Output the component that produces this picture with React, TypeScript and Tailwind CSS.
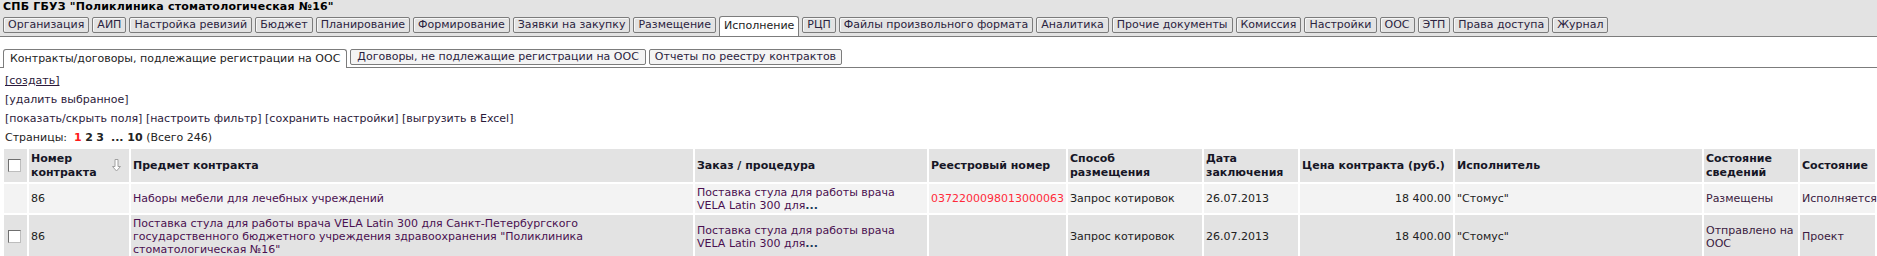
import React from "react";

const topTabs = [
  "Организация",
  "АИП",
  "Настройка ревизий",
  "Бюджет",
  "Планирование",
  "Формирование",
  "Заявки на закупку",
  "Размещение",
  "Исполнение",
  "РЦП",
  "Файлы произвольного формата",
  "Аналитика",
  "Прочие документы",
  "Комиссия",
  "Настройки",
  "ООС",
  "ЭТП",
  "Права доступа",
  "Журнал",
];

function Checkbox() {
  return (
    <span className="inline-block w-[13px] h-[13px] bg-white border border-t-[#6f6f6f] border-l-[#6f6f6f] border-r-[#bdbdbd] border-b-[#bdbdbd] align-middle" />
  );
}

function SortArrow() {
  return (
    <svg width="9" height="13" viewBox="0 0 9 13" className="shrink-0">
      <path
        d="M3 0.5 H6 V7.5 H8.5 L4.5 12 L0.5 7.5 H3 Z"
        fill="#fff"
        stroke="#a0a0a0"
        strokeWidth="1"
      />
    </svg>
  );
}

function TopBar() {
  return (
    <div className="bg-[#e3e3e3] border-b border-[#7c7c7c]">
      <div className="px-[3px] font-bold text-[11px] leading-[14px] tracking-[0.2px] text-black">
        СПБ ГБУЗ "Поликлиника стоматологическая №16"
      </div>
      <div className="flex items-start gap-[3px] px-[3px] pt-[3px] h-[22px]">
        {topTabs.map((t) =>
          t === "Исполнение" ? (
            <div
              key={t}
              className="bg-white border border-b-0 border-[#7c7c7c] rounded-t-[3px] px-[4px] h-[20px] -mt-[1px] leading-[17px] text-[#222] relative z-10"
            >
              {t}
            </div>
          ) : (
            <div
              key={t}
              className="border border-[#7c7c7c] rounded-[2px] shadow-[inset_1px_1px_0_#f7f7f7] px-[4px] h-[16px] leading-[14px] text-[#2b2340]"
            >
              {t}
            </div>
          )
        )}
      </div>
    </div>
  );
}

function SubTabs() {
  return (
    <div className="mt-[11px] flex items-end gap-[3px] pl-[3px] border-b border-[#7c7c7c] h-[20px]">
      <div className="bg-white border border-b-0 border-[#7c7c7c] rounded-t-[3px] px-[6px] h-[19px] -mb-[1px] leading-[17px] text-[#222]">
        Контракты/договоры, подлежащие регистрации на ООС
      </div>
      <div className="bg-[#f4f4f4] border border-[#7c7c7c] rounded-[2px] px-[6px] h-[16px] mb-[2px] leading-[14px] text-[#2b2340]">
        Договоры, не подлежащие регистрации на ООС
      </div>
      <div className="bg-[#f4f4f4] border border-[#7c7c7c] rounded-[2px] px-[5px] h-[16px] mb-[2px] leading-[14px] text-[#2b2340]">
        Отчеты по реестру контрактов
      </div>
    </div>
  );
}

function Actions() {
  return (
    <div className="mt-[3px] pl-[5px] text-[#2b1a3a]">
      <div className="leading-[19px]">
        <a className="underline">[создать]</a>
      </div>
      <div className="leading-[19px]">[удалить выбранное]</div>
      <div className="leading-[19px]">
        [показать/скрыть поля] [настроить фильтр] [сохранить настройки] [выгрузить в Excel]
      </div>
      <div className="leading-[19px] text-[#222]">
        Страницы:&nbsp; <b className="text-[#ff1a1a]">1</b> <b>2</b> <b>3</b>&nbsp; <b>... 10</b> (Всего 246)
      </div>
    </div>
  );
}

const th = "bg-[#e3e3e3] font-bold text-left align-middle px-[2px] leading-[14px] text-[#161626]";
const td = "align-middle px-[2px] leading-[13px]";

function ContractsTable() {
  return (
    <table className="ml-[2px] w-[1875px] table-fixed border-separate border-spacing-[2px]">
      <colgroup>
        <col className="w-[23px]" />
        <col className="w-[100px]" />
        <col className="w-[562px]" />
        <col className="w-[232px]" />
        <col className="w-[137px]" />
        <col className="w-[134px]" />
        <col className="w-[94px]" />
        <col className="w-[153px]" />
        <col className="w-[247px]" />
        <col className="w-[94px]" />
        <col className="w-[75px]" />
      </colgroup>
      <thead>
        <tr className="h-[33px]">
          <th className={th + " pl-[4px]"}>
            <Checkbox />
          </th>
          <th className={th}>
            <div className="flex items-center justify-between pr-[6px]">
              <span>
                Номер
                <br />
                контракта
              </span>
              <SortArrow />
            </div>
          </th>
          <th className={th}>Предмет контракта</th>
          <th className={th}>Заказ / процедура</th>
          <th className={th}>Реестровый номер</th>
          <th className={th}>
            Способ
            <br />
            размещения
          </th>
          <th className={th}>
            Дата
            <br />
            заключения
          </th>
          <th className={th}>Цена контракта (руб.)</th>
          <th className={th}>Исполнитель</th>
          <th className={th}>
            Состояние
            <br />
            сведений
          </th>
          <th className={th}>Состояние</th>
        </tr>
      </thead>
      <tbody>
        <tr className="h-[29px] bg-[#f3f3f3]">
          <td className={td}></td>
          <td className={td + " text-[#222]"}>86</td>
          <td className={td + " text-[#4a1050]"}>Наборы мебели для лечебных учреждений</td>
          <td className={td + " text-[#4a1050]"}>
            Поставка стула для работы врача
            <br />
            VELA Latin 300 для<b className="text-[#1a3a5a]">...</b>
          </td>
          <td className={td + " text-[#ff2a3a]"}>0372200098013000063</td>
          <td className={td + " text-[#222]"}>Запрос котировок</td>
          <td className={td + " text-[#222]"}>26.07.2013</td>
          <td className={td + " text-right text-[#222]"}>18 400.00</td>
          <td className={td + " text-[#222]"}>"Стомус"</td>
          <td className={td + " text-[#3a1a40]"}>Размещены</td>
          <td className={td + " text-[#3a1a40] whitespace-nowrap"}>Исполняется</td>
        </tr>
        <tr className="h-[43px] bg-[#e3e3e3]">
          <td className={td + " pl-[4px]"}>
            <Checkbox />
          </td>
          <td className={td + " text-[#222]"}>86</td>
          <td className={td + " text-[#4a1050]"}>
            Поставка стула для работы врача VELA Latin 300 для Санкт-Петербургского
            <br />
            государственного бюджетного учреждения здравоохранения "Поликлиника
            <br />
            стоматологическая №16"
          </td>
          <td className={td + " text-[#4a1050]"}>
            Поставка стула для работы врача
            <br />
            VELA Latin 300 для<b className="text-[#1a3a5a]">...</b>
          </td>
          <td className={td}></td>
          <td className={td + " text-[#222]"}>Запрос котировок</td>
          <td className={td + " text-[#222]"}>26.07.2013</td>
          <td className={td + " text-right text-[#222]"}>18 400.00</td>
          <td className={td + " text-[#222]"}>"Стомус"</td>
          <td className={td + " text-[#3a1a40]"}>
            Отправлено на
            <br />
            ООС
          </td>
          <td className={td + " text-[#3a1a40]"}>Проект</td>
        </tr>
      </tbody>
    </table>
  );
}

export default function App() {
  return (
    <div className="w-[1877px] h-[256px] overflow-hidden bg-white font-['DejaVu_Sans',Verdana,sans-serif] text-[11px]">
      <TopBar />
      <SubTabs />
      <Actions />
      <ContractsTable />
    </div>
  );
}
